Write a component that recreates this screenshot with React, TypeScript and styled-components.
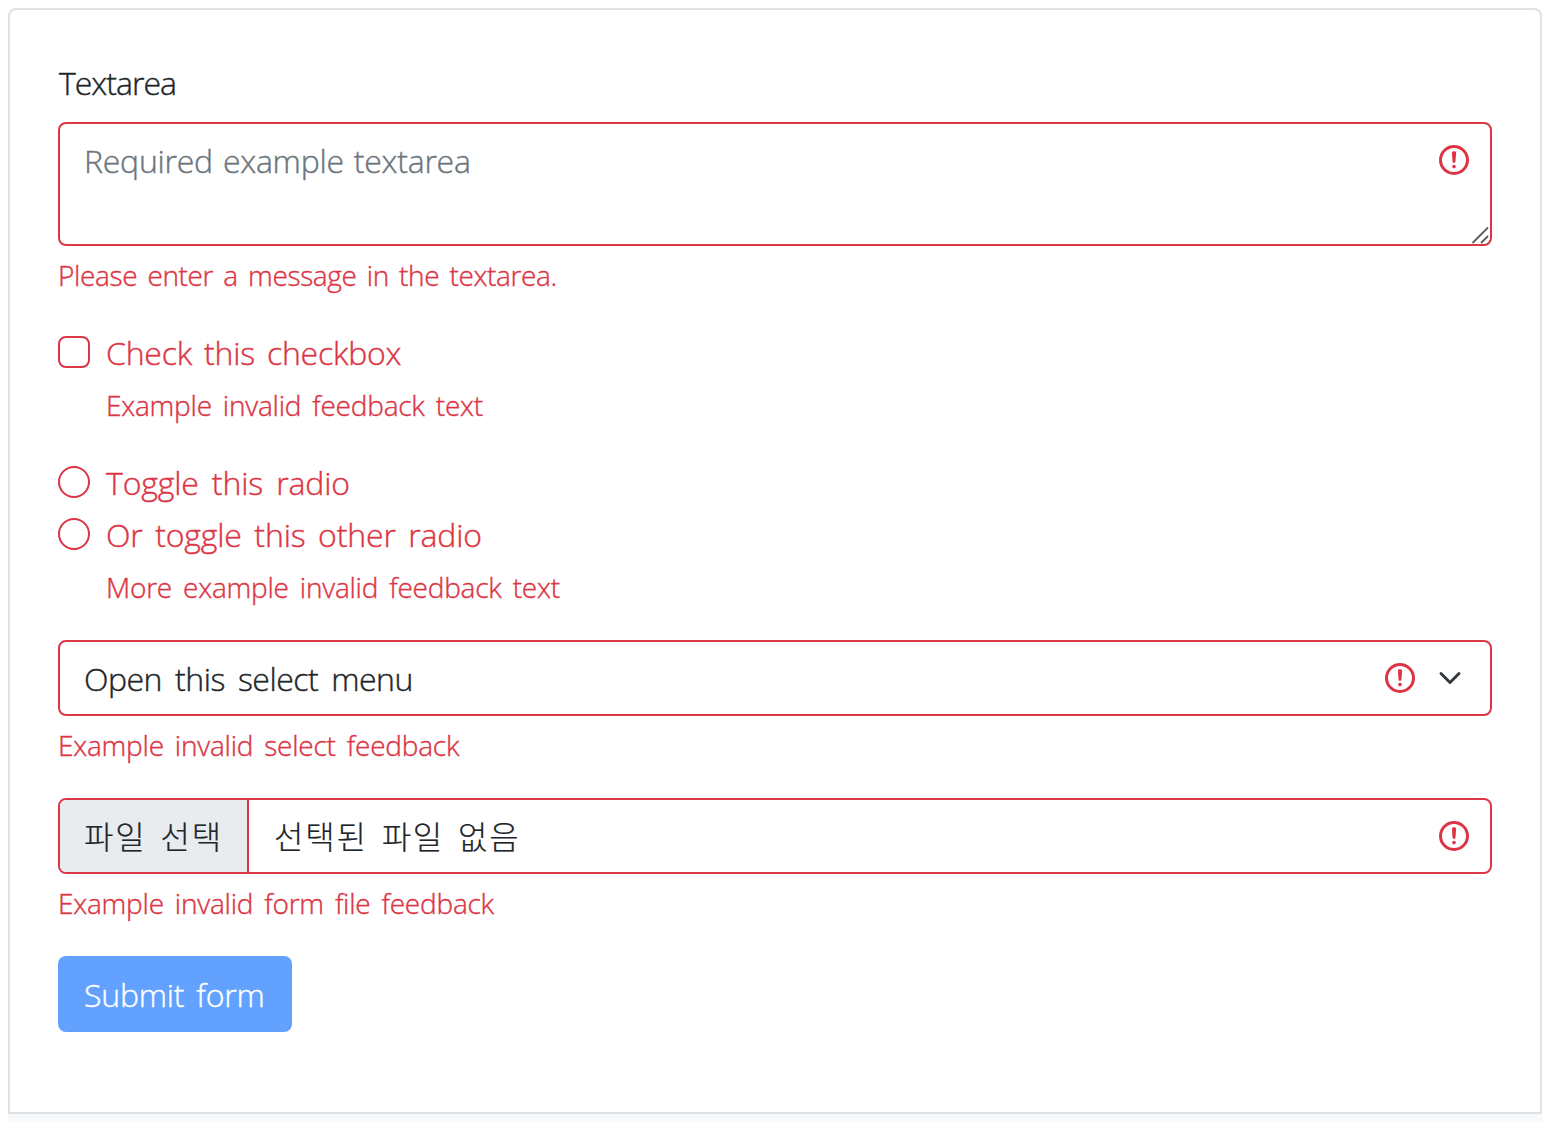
import React from "react";
import styled, { createGlobalStyle, css } from "styled-components";

const RED = "#dc3545";
const INK = "#212529";

const GlobalStyle = createGlobalStyle`
  *, *::before, *::after { box-sizing: border-box; }
  body {
    margin: 0;
    background: #fff;
    color: ${INK};
    font-family: "Open Sans", "Noto Sans CJK KR", sans-serif;
    font-size: 32px;
    font-weight: 300;
    line-height: 48px;
    -webkit-text-stroke: 0.4px;
  }
`;

type Spacing = { $ls?: number; $ws?: number };

const spacing = css<Spacing>`
  letter-spacing: ${(p) => p.$ls ?? -0.22}px;
  word-spacing: ${(p) => p.$ws ?? 4}px;
  white-space: nowrap;
`;

const Page = styled.div`
  height: 1122px;
  padding: 8px 10px 0 8px;
  overflow: hidden;
`;

const Example = styled.form`
  height: 1106px;
  padding: 48px;
  border: 2px solid #dee2e6;
  border-radius: 8px 8px 0 0;
`;

const CodeStrip = styled.div`
  height: 8px;
  background: #f8f9fa;
`;

const Group = styled.div`
  margin-bottom: 32px;
`;

const FieldLabel = styled.label<Spacing>`
  display: block;
  margin: 0 0 15px;
  padding: 1px 0 0 1px;
  ${spacing}
`;

const controlFrame = css`
  display: block;
  width: 100%;
  border: 2px solid ${RED};
  border-radius: 8px;
  background: #fff;
  color: ${INK};
  font: inherit;
  outline: none;
`;

const Control = styled.div`
  position: relative;
`;

const TextArea = styled.textarea<Spacing>`
  ${controlFrame}
  height: 124px;
  padding: 13px 24px 11px;
  resize: none;
  ${spacing}
  &::placeholder { color: #6c757d; opacity: 1; }
`;

const Select = styled.select<Spacing>`
  ${controlFrame}
  height: 76px;
  padding: 13px 132px 11px 24px;
  appearance: none;
  ${spacing}
`;

const FileField = styled.div`
  ${controlFrame}
  display: flex;
  height: 76px;
  overflow: hidden;
  -webkit-text-stroke: 0.2px;
`;

const FileButton = styled.span<Spacing>`
  width: 189px;
  padding: 13px 0 11px 24px;
  border-right: 2px solid ${RED};
  background: #e9ecef;
  ${spacing}
`;

const FileName = styled.span<Spacing>`
  padding: 13px 25px 11px;
  ${spacing}
`;

const Feedback = styled.div<Spacing>`
  margin-top: 8px;
  color: ${RED};
  font-size: 28px;
  line-height: 42px;
  ${spacing}
`;

const Check = styled.div<{ $gap: number }>`
  display: grid;
  grid-template-columns: 32px 1fr;
  column-gap: 16px;
  margin-bottom: ${(p) => p.$gap}px;
  ${Feedback} { grid-column: 2; }
`;

const CheckInput = styled.input`
  appearance: none;
  width: 32px;
  height: 32px;
  margin: 8px 0 0;
  border: 2px solid ${RED};
  border-radius: ${(p) => (p.type === "radio" ? "50%" : "8px")};
  background: #fff;
`;

const CheckLabel = styled.label<Spacing>`
  height: 48px;
  padding-top: 1px;
  color: ${RED};
  ${spacing}
`;

const Submit = styled.button<Spacing>`
  display: block;
  width: 234px;
  height: 76px;
  padding: 13px 0 11px 26px;
  border: 0;
  border-radius: 8px;
  background: #62a1fe;
  color: #fff;
  font: inherit;
  text-align: left;
  ${spacing}
`;

const AlertSvg = styled.svg<{ $right: number }>`
  position: absolute;
  top: 20px;
  right: ${(p) => p.$right}px;
  width: 36px;
  height: 36px;
`;

const ChevronSvg = styled.svg`
  position: absolute;
  top: 26px;
  right: 26px;
  width: 32px;
  height: 24px;
`;

const GripSvg = styled.svg`
  position: absolute;
  right: 3px;
  bottom: 2px;
  width: 18px;
  height: 18px;
`;

const Alert = ({ right = 20 }: { right?: number }) => (
  <AlertSvg $right={right} viewBox="0 0 12 12" fill="none" stroke={RED}>
    <circle cx="6" cy="6" r="4.5" />
    <path strokeLinejoin="round" d="M5.8 3.6h.4L6 6.5z" />
    <circle cx="6" cy="8.2" r=".6" fill={RED} stroke="none" />
  </AlertSvg>
);

export default function App() {
  return (
    <>
      <GlobalStyle />
      <Page>
        <Example onSubmit={(e: React.FormEvent) => e.preventDefault()}>
          <Group>
            <FieldLabel htmlFor="message" $ls={-1}>Textarea</FieldLabel>
            <Control>
              <TextArea id="message" placeholder="Required example textarea" $ls={-0.25} $ws={2} />
              <Alert />
              <GripSvg viewBox="0 0 18 18" fill="none" stroke="#5c5c5c" strokeWidth="1.8">
                <path d="M1.500 17L17 1.500M10 17L17 10" />
              </GripSvg>
            </Control>
            <Feedback $ls={-0.36} $ws={3.3}>Please enter a message in the textarea.</Feedback>
          </Group>

          <Check $gap={32}>
            <CheckInput type="checkbox" id="check" />
            <CheckLabel htmlFor="check">Check this checkbox</CheckLabel>
            <Feedback>Example invalid feedback text</Feedback>
          </Check>

          <Check $gap={4}>
            <CheckInput type="radio" name="pick" id="radio1" />
            <CheckLabel htmlFor="radio1" $ls={-0.15} $ws={5}>Toggle this radio</CheckLabel>
          </Check>
          <Check $gap={32}>
            <CheckInput type="radio" name="pick" id="radio2" />
            <CheckLabel htmlFor="radio2" $ls={-0.15} $ws={4.4}>Or toggle this other radio</CheckLabel>
            <Feedback>More example invalid feedback text</Feedback>
          </Check>

          <Group>
            <Control>
              <Select aria-label="Select" $ls={-0.5} $ws={5.3}>
                <option>Open this select menu</option>
              </Select>
              <Alert right={74} />
              <ChevronSvg viewBox="0 0 16 16" fill="none" stroke="#343a40" strokeWidth="2" strokeLinecap="round" strokeLinejoin="round">
                <path d="M2 5l6 6 6-6" />
              </ChevronSvg>
            </Control>
            <Feedback>Example invalid select feedback</Feedback>
          </Group>

          <Group>
            <Control>
              <FileField>
                <FileButton $ls={1.8} $ws={4}>파일 선택</FileButton>
                <FileName $ls={1.75} $ws={4}>선택된 파일 없음</FileName>
              </FileField>
              <Alert />
            </Control>
            <Feedback>Example invalid form file feedback</Feedback>
          </Group>

          <Submit type="submit">Submit form</Submit>
        </Example>
        <CodeStrip />
      </Page>
    </>
  );
}
